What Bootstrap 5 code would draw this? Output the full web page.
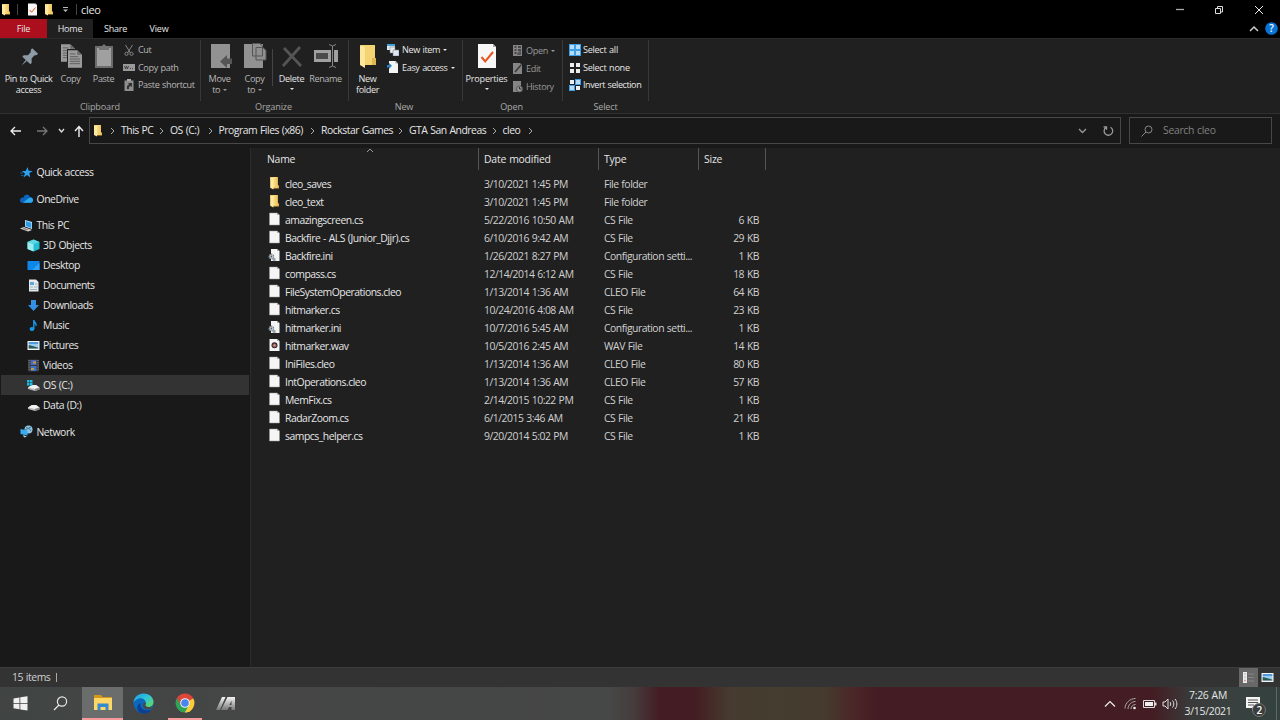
<!DOCTYPE html>
<html lang="en">
<head>
    <meta charset="UTF-8">
    <meta name="viewport" content="width=device-width, initial-scale=1.0">
    <title>cleo</title>
    <link rel="stylesheet" href="https://cdn.jsdelivr.net/npm/bootstrap@5.3.0/dist/css/bootstrap.min.css">
    <style>
        body { width: 1280px; height: 720px; background: #000; color: #e6e6e6; font: 10.4px/14px "Open Sans", "Noto Sans", sans-serif; letter-spacing: -.48px; word-spacing: .6px; }
        svg { display: block; flex: none; }
        .titlebar { height: 19px; padding-left: 1px; }
        .title-text { font-size: 11px; margin-left: 4px; letter-spacing: -.3px; }
        .vline { width: 1px; background: #444; }
        .winbtn { width: 39px; }
        .tabs { height: 19px; font-size: 9px; letter-spacing: -.2px; }
        .tabs .nav-link { padding: 0; color: #e6e6e6; line-height: 20px; height: 19px; text-align: center; border-radius: 0; }
        .tabs .tab-file { background: #ab0e1c; }
        .tabs .active { background: #202020; }
        .ribbon { height: 76px; background: #202020; border-top: 1px solid #2b2b2b; border-bottom: 1px solid #303030; font-size: 9.1px; letter-spacing: -.36px; }
        .group { border-right: 1px solid #383838; height: 61px; margin-top: 1px; position: relative; }
        .group-body { height: 59px; }
        .caption { text-align: center; color: #a8a8a8; line-height: 16px; letter-spacing: -.15px; }
        .big { text-align: center; line-height: 11.5px; padding-top: 3px; white-space: nowrap; }
        .big svg { margin: 0 auto 3.5px; }
        .dim { color: #b8b8b8; }
        .dimmer { color: #999; }
        .smalls { padding-top: 1px; }
        .smalls > div { height: 17.5px; display: flex; align-items: center; white-space: nowrap; padding-top: 1px; }
        .smalls.loose > div { height: 18px; }
        .smalls svg:first-child { margin-right: 3px; }
        .caret { display: inline-block; border: 2.5px solid transparent; border-top-color: currentColor; border-bottom: 0; margin-left: 3px; vertical-align: 2px; }
        .addressbar { height: 34px; background: #191919; padding-top: 3px; }
        .address, .search { height: 27px; border: 1px solid #484848; }
        .address { width: 1032px; padding-left: 3px; }
        .search { width: 143px; margin-left: 8px; color: #808080; padding-left: 11px; letter-spacing: -.3px; }
        .crumb { justify-content: space-between; padding-right: 6px; white-space: nowrap; }
        .crumb span { margin-top: -1px; }
        .main { height: 519px; }
        .sidebar { width: 251px; background: #191919; border-right: 1px solid #2b2b2b; padding: 14px 1px 0; letter-spacing: -.45px; }
        .node { height: 20px; padding-left: 19px; display: flex; align-items: center; }
        .node svg { margin-right: 3.5px; }
        .child { padding-left: 25.5px; }
        .gap-top { margin-top: 6.5px; }
        .picked { background: #333; }
        .files { background: #202020; padding-left: 16px; }
        .head { height: 22px; letter-spacing: -.2px; }
        .head > div { border-right: 1px solid #555; padding-top: 4px; position: relative; }
        .sort { position: absolute; left: 99px; top: 0; }
        .line { height: 18px; color: #d0d0d0; white-space: nowrap; }
        .line .fname { color: #e6e6e6; }
        .c-name { width: 212px; }
        .c-date { width: 120px; padding-left: 5px; }
        .c-type { width: 100px; padding-left: 5px; }
        .c-size { width: 67px; padding-left: 5px; }
        .c-kb { width: 60px; }
        .statusbar { height: 20px; background: #333; border-top: 1px solid #3c3c3c; color: #d0d0d0; padding-left: 12px; letter-spacing: -.45px; }
        .viewbtn { width: 19px; height: 19px; display: flex; align-items: center; justify-content: center; }
        .taskbar { height: 33px; background: linear-gradient(90deg, #404543, #464646 23%, #434745 37%, #464646 42%, #464848 47.5%, #463c3c 49.5%, #441d24 51.5%, #441d24 54.3%, #463b2e 57%, #443e30 61%, #453a2e 64.5%, #4b2527 66.8%, #431d23 68.5%, #431d23 90%, #393a3a 93%, #39413f 96%, #33423e); }
        .task { width: 41px; height: 33px; display: flex; align-items: center; justify-content: center; }
        .task.open { background: #6b6d6c; }
        .task.open, .task.running { border-bottom: 2px solid #f79a9c; }
        .task.running { width: 34px; margin: 0 3px 0 4px; }
        .clock { width: 52px; text-align: center; line-height: 15.5px; letter-spacing: -.25px; }
        .count { position: absolute; left: 6px; top: 6px; width: 14px; height: 14px; border-radius: 50%; background: #3a3d3c; border: 1px solid #777; font-size: 10px; font-weight: 600; line-height: 12px; text-align: center; color: #fff; }
    </style>
</head>
<body class="overflow-hidden">

<!-- Shared icons -->
<svg width="0" height="0" class="position-absolute">
    <defs>
        <linearGradient id="gold" x2="1"><stop stop-color="#ffe490"/><stop offset="1" stop-color="#e8bd55"/></linearGradient>
        <linearGradient id="edge" x2="1" y2="1"><stop stop-color="#1b9de2"/><stop offset=".5" stop-color="#31c5d5"/><stop offset="1" stop-color="#6bdd4c"/></linearGradient>
        <linearGradient id="silver" x2="0" y2="1"><stop stop-color="#f5f5f5"/><stop offset="1" stop-color="#777"/></linearGradient>
    </defs>
    <symbol id="i-folder" viewBox="0 0 10 13"><path d="M1 1h7v7l1 1v2.500H3z" fill="#d9a93f"/><path d="M3 1h5v7.500l1 .8v1.700H3z" fill="url(#gold)"/><path d="M1 1l3 1v10.500L1 11z" fill="#ffe9a0"/></symbol>
    <symbol id="i-page" viewBox="0 0 12 14"><path d="M1 1h7.500L11 3v10H1z" fill="#f5f5f5" stroke="#999" stroke-width=".5"/><path d="M8.500 1v2H11z" fill="#aaa"/></symbol>
    <symbol id="i-ini" viewBox="0 0 12 14"><path d="M2.500 1h6L11 3v10H2.500z" fill="#f5f5f5"/><path d="M8.500 1v2H11z" fill="#aaa"/><circle cx="2.900" cy="8.500" r="2.200" fill="#d7dde0" stroke="#7f8b92" stroke-width="1.400" stroke-dasharray="1.200 .6"/><circle cx="2.900" cy="8.500" r=".9" fill="#53616a"/><circle cx="5.600" cy="11.500" r="1.700" fill="#9aa6ad"/></symbol>
    <symbol id="i-wav" viewBox="0 0 12 14"><path d="M1 1h7.500L11 3v10H1z" fill="#f5f5f5"/><path d="M8.500 1v2H11z" fill="#aaa"/><circle cx="6" cy="7.300" r="3" fill="#3a2638"/><circle cx="6" cy="7.300" r="1.900" fill="#b9603d"/><circle cx="6" cy="7.300" r=".9" fill="#7cc0d8"/></symbol>
    <symbol id="i-check" viewBox="0 0 20 26"><path d="M1 1h15l3 3v21H1z" fill="#f7f7f7"/><path d="M16 1v3h3z" fill="#aaa"/><path d="M4.500 14l3.700 4.500L16 9" fill="none" stroke="#e8541e" stroke-width="2"/></symbol>
    <symbol id="i-chev" viewBox="0 0 5 8"><path d="M1 1l3 3-3 3" fill="none" stroke="#aaa"/></symbol>
    <symbol id="i-drive" viewBox="0 0 13 13"><path d="M1 8.500L5 6h4l3.500 2.500v2L8 12 1 10z" fill="#b8b8b8"/><path d="M1 8.500L5 6h4l3.500 2.500L8 10z" fill="#f2f2f2"/><path d="M8 10v2l4.500-1.500v-2z" fill="#888"/></symbol>
    <symbol id="i-picture" viewBox="0 0 13 11"><path d="M.5 1h12v9H.5z" fill="#f3f3f3"/><path d="M1.700 2.200h9.600v6.400H1.700z" fill="#9bcdf3"/><path d="M1.700 2.200h9.600v1.600H1.700z" fill="#3f8bd8"/><path d="M1.700 5l4 1 5.600 1.700v.9H1.700z" fill="#2c5a50"/></symbol>
    <symbol id="i-sheet" viewBox="0 0 15 19"><path d="M0 0h10l5 5v14H0z" fill="#9b9b9b"/><path d="M10 0v5h5z" fill="#666"/><path d="M2 4h6M2 7h9M2 9.500h11M2 12h11M2 14.500h11" stroke="#5d5d5d"/></symbol>
</svg>

<!-- Title bar -->
<div class="titlebar d-flex align-items-center">
    <svg width="10" height="13"><use href="#i-folder"/></svg>
    <div class="vline" style="height:11px;margin-left:6px"></div>
    <svg width="11" height="13" style="margin-left:9px"><use href="#i-check"/></svg>
    <svg width="10" height="13" style="margin-left:6px"><use href="#i-folder"/></svg>
    <svg width="5" height="6" style="margin-left:9px"><path d="M0 .5h5" stroke="#bbb"/><path d="M0 2.500h5L2.500 5z" fill="#bbb"/></svg>
    <div class="vline" style="height:11px;margin-left:8px"></div>
    <div class="title-text">cleo</div>
    <div class="d-flex ms-auto">
        <div class="winbtn"><svg class="mx-auto" width="9" height="10"><path d="M1 4.500h8" stroke="#aaa" stroke-width="1.300"/></svg></div>
        <div class="winbtn"><svg class="mx-auto" width="10" height="10" fill="none" stroke="#ddd"><path d="M1.500 3.500h5v5h-5zM3.500 3V1.500h5v5.500h-2"/></svg></div>
        <div class="winbtn" style="width:42px"><svg class="mx-auto" width="10" height="10"><path d="M1 1l8 8M9 1L1 9" stroke="#eee"/></svg></div>
    </div>
</div>

<!-- Ribbon tabs -->
<div class="tabs nav">
    <a class="nav-link tab-file" style="width:47px">File</a>
    <a class="nav-link active" style="width:46px">Home</a>
    <a class="nav-link" style="width:45px">Share</a>
    <a class="nav-link" style="width:42px">View</a>
    <div class="ms-auto d-flex align-items-center me-1">
        <svg width="11" height="7" style="margin-right:6px"><path d="M2 6l4-4 4 4" fill="none" stroke="#ccc" stroke-width="1.500"/></svg>
        <svg width="13" height="13" style="margin-right:-2px"><circle cx="6.500" cy="6.500" r="6.300" fill="#0a74d6"/><text x="6.500" y="10" text-anchor="middle" font-size="10" font-weight="600" fill="#fff">?</text></svg>
    </div>
</div>

<!-- Ribbon -->
<div class="ribbon d-flex">
    <div class="group" style="width:201px">
        <div class="group-body d-flex">
            <div class="big" style="width:57px">
                <svg width="26" height="26"><g transform="translate(13 14.500) rotate(43)" fill="#8c9ba5"><path d="M-4-9h8v2L2.600-5v4l3 3v2h-11V2l3-3v-4L-4-7z"/><path d="M-.8 4h1.600L0 11z"/></g></svg>
                Pin to Quick<br>access
            </div>
            <div class="big dim" style="width:27px">
                <svg width="22" height="26"><use href="#i-sheet" x="1" y="1" width="14" height="18"/><path d="M7 6h10l4 4v15H7z" fill="#202020"/><use href="#i-sheet" x="8" y="7" width="14" height="18"/></svg>
                Copy
            </div>
            <div class="big dim" style="width:39px">
                <svg width="20" height="26"><path d="M1 3h18v22H1z" fill="#6c6c6c"/><path d="M3 5h14v18H3z" fill="#a0a0a0"/><path d="M5 3h3l2-2 2 2h3v4H5z" fill="#757575"/></svg>
                Paste
            </div>
            <div class="smalls dim">
                <div><svg width="12" height="12" fill="none" stroke="#858585"><path d="M2.500 1l5 8M9.500 1l-5 8"/><circle cx="3.500" cy="9.800" r="1.600"/><circle cx="8.500" cy="9.800" r="1.600"/></svg>Cut</div>
                <div><svg width="12" height="9"><path d="M0 1h12v7H0z" fill="#999"/><path d="M1.500 3l1 3 1-3 1 3 1-3M7 5.500h1M9 5.500h1" fill="none" stroke="#333" stroke-width=".8"/></svg>Copy path</div>
                <div><svg width="12" height="12"><path d="M1.500 1.500h9V12h-9z" fill="#8d8d8d"/><path d="M4 0h4v2H4z" fill="#aaa"/><path d="M4 10V7l2-1.500-1-1.500h4v4L7.500 7 6 8v2z" fill="#333"/></svg>Paste shortcut</div>
            </div>
        </div>
        <div class="caption">Clipboard</div>
    </div>
    <div class="group" style="width:148px">
        <div class="group-body d-flex">
            <div class="big dim" style="width:37px">
                <svg width="24" height="26"><path d="M3 1h19v24H3z" fill="#929292"/><path d="M24 15.500h-5V12l-7 6.500 7 6.500v-4h5z" fill="#555"/></svg>
                Move<br>to <span class="caret dimmer m-0"></span>
            </div>
            <div class="big dim" style="width:33px">
                <svg width="24" height="26"><path d="M1 1h19v24H1z" fill="#929292"/><path d="M9.500.5H17l2.500 2.500v10h-10zM13 4.500h7l3 3v9.500H13z" fill="#909090" stroke="#555"/></svg>
                Copy<br>to <span class="caret dimmer m-0"></span>
            </div>
            <div class="vline" style="height:37px;margin:9px 1px 0"></div>
            <div class="big" style="width:35px">
                <svg width="24" height="26"><path d="M4 5l17 18M20 4L3 23" stroke="#555" stroke-width="2.800"/></svg>
                Delete<br><span class="caret m-0" style="vertical-align:3px"></span>
            </div>
            <div class="big dim" style="width:33px">
                <svg width="26" height="26"><path d="M1 7h24v12H1z" fill="#a0a0a0"/><path d="M3 10h12v6H3z" fill="#4b4b4b"/><path d="M19.500 2v22" stroke="#202020" stroke-width="3"/><path d="M16 1.500l3.500 1.500L23 1.500M19.500 3v20M16 24.500l3.500-1.500 3.500 1.500" stroke="#858585" fill="none"/></svg>
                Rename
            </div>
        </div>
        <div class="caption" style="padding-right:2px">Organize</div>
    </div>
    <div class="group" style="width:114px">
        <div class="group-body d-flex">
            <div class="big" style="width:38px;padding-right:1px">
                <svg width="18" height="26"><path d="M2 2h14v20H2z" fill="#f4d373"/><path d="M13 15h4v7h-4z" fill="#e0b64f"/><path d="M1 2l5 2v21l-5-3z" fill="#ffe69b"/></svg>
                New<br>folder
            </div>
            <div class="smalls">
                <div><svg width="12" height="12"><path d="M0 0h8v6H0z" fill="#d8ecfa"/><path d="M0 0h8v2H0z" fill="#45a0d8"/><path d="M3 3h5v6H3z" fill="#eee" stroke="#777" stroke-width=".5"/><path d="M6 6h6v6H6z" fill="#dde8f8" stroke="#777" stroke-width=".5"/></svg>New item<span class="caret"></span></div>
                <div><svg width="12" height="13"><path d="M2 0h6.500L11 2.500V12H2z" fill="#f5f5f5"/><path d="M8.500 0v2.500H11z" fill="#aaa"/><path d="M0 7V4h2V2l3 2.700L2 8V6z" fill="#2980c4"/></svg>Easy access<span class="caret"></span></div>
            </div>
        </div>
        <div class="caption" style="padding-right:3px">New</div>
    </div>
    <div class="group" style="width:100px">
        <div class="group-body d-flex">
            <div class="big" style="width:49px;padding-right:2px;letter-spacing:-.2px">
                <svg width="20" height="26"><use href="#i-check"/></svg>
                Properties<br><span class="caret m-0" style="vertical-align:3px"></span>
            </div>
            <div class="smalls loose dimmer">
                <div><svg width="11" height="13"><path d="M1 1h9v11H1z" fill="#858585"/><path d="M2.500 3h2M6 3h3M2.500 6h2M6 6h3M2.500 9h2" stroke="#333" stroke-width="1.400"/><path d="M5 11l1-3 3-1v4z" fill="#555"/></svg>Open<span class="caret"></span></div>
                <div><svg width="11" height="13"><path d="M1 1h7l2 2v9H1z" fill="#858585"/><path d="M3 10L9 3" stroke="#333" stroke-width="1.300"/></svg>Edit</div>
                <div><svg width="11" height="13"><path d="M1 1h8v11H1z" fill="#858585"/><circle cx="7.500" cy="9" r="3" fill="#999" stroke="#555"/><path d="M7.500 7v2h2" stroke="#333" fill="none"/></svg>History</div>
            </div>
        </div>
        <div class="caption" style="padding-right:2px">Open</div>
    </div>
    <div class="group" style="width:86px">
        <div class="group-body smalls" style="padding-left:6px;letter-spacing:-.28px">
            <div><svg width="12" height="12" style="margin-right:2px"><path d="M0 0h12v12H0z" fill="#3d9fe8"/><path d="M1 1h4v4H1zM7 1h4v4H7zM1 7h4v4H1zM7 7h4v4H7z" fill="#b5dcf9"/></svg>Select all</div>
            <div><svg width="12" height="12" style="margin-right:2px"><path d="M1 1h4v4H1zM7 1h4v4H7zM1 7h4v4H1zM7 7h4v4H7z" fill="#eee"/></svg>Select none</div>
            <div><svg width="12" height="12" style="margin-right:2px"><path d="M6 0h6v6H6zM0 6h6v6H0z" fill="#3d9fe8"/><path d="M7 1h4v4H7zM1 7h4v4H1z" fill="#b5dcf9"/><path d="M1 1h4v4H1zM7 7h4v4H7z" fill="#eee"/></svg><span style="letter-spacing:-.45px">Invert selection</span></div>
        </div>
        <div class="caption">Select</div>
    </div>
</div>

<!-- Address bar -->
<div class="addressbar d-flex">
    <div class="d-flex align-items-center" style="width:89px;padding-left:10px;height:27px">
        <svg width="12" height="12" fill="none" stroke="#eee" stroke-width="1.300"><path d="M11 6H1M5 2L1 6l4 4"/></svg>
        <svg width="12" height="12" fill="none" stroke="#777" stroke-width="1.300" style="margin-left:14px"><path d="M1 6h10M7 2l4 4-4 4"/></svg>
        <svg width="7" height="6" fill="none" stroke="#ddd" stroke-width="1.400" style="margin-left:10px"><path d="M1 1l2.500 3L6 1"/></svg>
        <svg width="10" height="12" fill="none" stroke="#eee" stroke-width="1.400" style="margin-left:8.500px"><path d="M5 12V2M1 6l4-4.500L9 6"/></svg>
    </div>
    <div class="address d-flex align-items-center">
        <svg width="10" height="13"><use href="#i-folder"/></svg>
        <svg width="5" height="8" style="margin:0 6px 0 7px"><use href="#i-chev"/></svg>
        <div id="crumbs" class="d-flex"></div>
        <svg class="ms-auto" width="9" height="6" style="margin-right:15.500px"><path d="M1 1l3.500 3.500L8 1" fill="none" stroke="#999" stroke-width="1.300"/></svg>
        <svg width="11" height="12" style="margin-right:6.500px" fill="none" stroke="#999" stroke-width="1.300"><path d="M7.500 2.200A4.300 4.300 0 1 1 3 2.400M.5 1.800h3v3"/></svg>
    </div>
    <div class="search d-flex align-items-center">
        <svg width="12" height="12" fill="none" stroke="#888"><circle cx="7.500" cy="4.500" r="3.500"/><path d="M5 7l-4.500 4.500"/></svg>
        <span style="margin:-1px 0 0 10px">Search cleo</span>
    </div>
</div>

<!-- Folder tree and file list -->
<div class="main d-flex">
    <div class="sidebar">
        <div class="node"><svg width="13" height="13"><path d="M7.500 1l1.200 3.800 4 .2-3.400 2.300 1 4.200-3.300-2.500L3.500 11.500 5 7.500 1.800 5l4 .1z" fill="#2ba0f5"/><path d="M0 7h3M1 9.500h2.500" stroke="#155b94"/></svg>Quick access</div>
        <div class="node gap-top"><svg width="13" height="13"><path d="M0 8.500C0 6 2 5 3.500 5.500 4.500 1.500 9 1.500 10 5c2 0 3 1.500 3 3s-1 2.800-2.500 2.800H3C1 10.800 0 10 0 8.500z" fill="#0a63bd"/><path d="M3 10.800L7.500 7l2.500-1.500c2 0 3 1.200 3 2.700s-1 2.600-2.500 2.600z" fill="#2da9ee"/></svg>OneDrive</div>
        <div class="node gap-top"><svg width="13" height="13"><path d="M5 1l7 2v7L5 7.500z" fill="#cde8f8"/><path d="M5.700 2l5.700 1.700V9L5.700 7z" fill="#2f9ce8"/><path d="M0 9.500L4 8l8 3-4 1.500z" fill="#d9d9d9"/><path d="M2 9.500l2.500-.8 4.500 2-2 .8z" fill="#888"/></svg>This PC</div>
        <div class="node child"><svg width="13" height="13"><path d="M6.500.5L12.500 3v7l-6 2.500L.5 10V3z" fill="#23bdd5"/><path d="M.5 3l6 2v7.500L.5 10z" fill="#9cebef"/><path d="M.5 3l6-2.500 6 2.500-6 2z" fill="#5dd8e2"/></svg>3D Objects</div>
        <div class="node child"><svg width="13" height="13"><path d="M.5 2h12v9H.5z" fill="#0e87e8"/><path d="M5 11l7.500-7v7z" fill="#2da5fc"/></svg>Desktop</div>
        <div class="node child"><svg width="13" height="13"><path d="M2 .5h7L11.500 3v9.500H2z" fill="#e9e9e9"/><path d="M3 3h4v3H3z" fill="#5aa8dd"/><path d="M8 5h2.500M3 8h3M7 8h3.500M3 10.500h7" stroke="#8db5cd"/></svg>Documents</div>
        <div class="node child"><svg width="13" height="13"><path d="M4 1h5v5h3L6.500 12 1 6h3z" fill="#3291e4"/></svg>Downloads</div>
        <div class="node child"><svg width="13" height="13"><ellipse cx="5" cy="10" rx="2.400" ry="2" fill="#169af0"/><path d="M6.800 10V1c0 2.500 3.200 3 2.200 6" fill="none" stroke="#169af0" stroke-width="1.400"/></svg>Music</div>
        <div class="node child"><svg width="13" height="11"><use href="#i-picture"/></svg>Pictures</div>
        <div class="node child"><svg width="13" height="13"><path d="M1 .5h11v12H1z" fill="#383838"/><path d="M3.500 1h6v5h-6z" fill="#4968be"/><path d="M3.500 7h6v5h-6z" fill="#3c72c4"/><path d="M6 2.500h3v2H6zM4 9h3v2H4z" fill="#c49a50"/><path d="M2 1v11M11 1v11" stroke="#999" stroke-dasharray="1 1.200"/></svg>Videos</div>
        <div class="node child picked"><svg width="13" height="13"><use href="#i-drive"/><path d="M0 1h2.500v2.500H0zM3 1h2.500v2.500H3zM0 4h2.500v2.500H0zM3 4h2.500v2.500H3z" fill="#18c0e8"/></svg>OS (C:)</div>
        <div class="node child"><svg width="13" height="13"><use href="#i-drive"/></svg>Data (D:)</div>
        <div class="node gap-top"><svg width="13" height="13"><circle cx="8.500" cy="4.500" r="4" fill="#92c5dc"/><path d="M6 2c2 2 4 1 5 4M5 5l6-3" stroke="#397da5" fill="none"/><path d="M.5 4l7 1.500v5L.5 9z" fill="#38adf2"/><path d="M3 10l4 1.500-3 1z" fill="#a6d8ee"/></svg>Network</div>
    </div>
    <div class="files flex-grow-1">
        <div class="head d-flex">
            <div class="c-name">Name<svg class="sort" width="8" height="5"><path d="M1 4l3-3 3 3" fill="none" stroke="#999"/></svg></div>
            <div class="c-date">Date modified</div>
            <div class="c-type">Type</div>
            <div class="c-size">Size</div>
        </div>
        <div id="fileList" style="padding-top:5px"></div>
    </div>
</div>

<!-- Status bar -->
<div class="statusbar d-flex align-items-center">
    <span style="margin-top:-2px">15 items</span>
    <div class="vline" style="height:9px;margin:-1px 0 0 6px;background:#aaa"></div>
    <div class="d-flex ms-auto" style="margin-right:3px">
        <div class="viewbtn" style="background:#686868"><svg width="13" height="13"><path d="M1 1h4v11H1z" fill="#eee"/><path d="M2.500 3h1M2.500 6h1" stroke="#778"/><path d="M2.500 9.500h1" stroke="#d44" stroke-width="1.500"/><path d="M6 3h6M6 6.500h6M6 10h6" stroke="#858585"/></svg></div>
        <div class="viewbtn"><svg width="13" height="11"><use href="#i-picture"/></svg></div>
    </div>
</div>

<!-- Taskbar -->
<div class="taskbar d-flex align-items-center">
    <div class="task"><svg width="15" height="15" fill="#f0f0f0"><path d="M.5 2.500L6.500 1.500V7h-6zM7.300 1.300L14.500.3V7H7.300zM.5 7.800h6v5.500l-6-1zM7.300 7.800h7.200v6.700l-7.200-1z"/></svg></div>
    <div class="task"><svg width="15" height="15" fill="none" stroke="#e8e8e8" stroke-width="1.200" style="margin-right:3px"><circle cx="9" cy="5.500" r="4.600"/><path d="M6 9L1 14"/></svg></div>
    <div class="task open"><svg width="20" height="17"><path d="M1 1h7l1.500 2H19v13H1z" fill="#d59719"/><path d="M1 4h18v12H1z" fill="#ffd767"/><path d="M4.500 16V9.500h11V16h-3v-3h-5v3z" fill="#348bd0"/></svg></div>
    <div class="task"><svg width="21" height="21"><circle cx="10.500" cy="10.500" r="10" fill="#0d67bd"/><path d="M.5 10C1 4 5 .5 10.500.5c6 0 10 4 10 8.500 0 3-2.500 5-5.500 5-2.500 0-3.500-1-2.500-2.500C14 8 10 4 6 5.500 3 6.500 1 8 .5 10z" fill="url(#edge)"/><path d="M7.500 10c-1 5 3 8.500 10.500 7-2 3-5 3.800-8 3.500C4 20 2 13 7.500 10z" fill="#0c3f92"/><path d="M13 11c-2 2 1.500 4 6 2.500l-1 2.500c-5 1.500-9-1-8-5 1-2 3-2 3 0z" fill="#464947"/></svg></div>
    <div class="task running"><svg width="20" height="20" viewBox="-10 -10 20 20"><path d="M0 0L-8.200-4.700A9.500 9.500 0 0 1 8.200-4.700z" fill="#df4639"/><path d="M0 0L8.200-4.700A9.500 9.500 0 0 1 0 9.500z" fill="#fbcc38"/><path d="M0 0L0 9.500A9.500 9.500 0 0 1-8.200-4.700z" fill="#2fa457"/><path d="M0-4.700h8.200L0 0zM-8.200-4.700L-4 2.400 0 0z" fill="#df4639"/><path d="M-4 2.400L0 9.500 4 2.400z" fill="#2fa457"/><path d="M4 2.400L0 9.500l5-1 3-6z" fill="#fbcc38"/><circle r="4.800" fill="#f3f3f3"/><circle r="3.800" fill="#4587ee"/></svg></div>
    <div class="task"><svg width="20" height="16"><path d="M6 1h3.500L4 14H0zM11.500 1H15L9 14H5z" fill="url(#silver)"/><path d="M14.500 1H19v13h-3.500v-3H13l-1.500 3H8.500zM15.500 4.500l-2 4.500h2z" fill="url(#silver)"/></svg></div>

    <div class="d-flex align-items-center ms-auto">
        <svg width="12" height="8" style="margin-right:8px"><path d="M1 6.500L6 1.500l5 5" fill="none" stroke="#eee" stroke-width="1.200"/></svg>
        <svg width="13" height="13" style="margin-right:6px" fill="none" stroke="#aaa"><path d="M1 11.500C1 6 6 1.500 11.500 1.500M4 12c0-4 3.500-7.500 7.500-7.500M7 12c0-2.500 2-4.500 4.500-4.500"/><circle cx="10.500" cy="11" r="1.300" fill="#eee" stroke="none"/></svg>
        <svg width="14" height="10" style="margin-right:5px"><path d="M.5 1.500h11v7H.5z" fill="none" stroke="#ddd"/><path d="M2 3h8v4H2z" fill="#eee"/><path d="M12 3.500h1.500v3H12z" fill="#ddd"/></svg>
        <svg width="16" height="14" fill="none" stroke="#ddd" style="margin-right:4px"><path d="M1 5h2l3-3v10L3 9H1zM8 5c1 1 1 3 0 4M10.500 3.500c1.800 2 1.800 5 0 7M13 2c2.500 3 2.500 7 0 10"/></svg>
        <div class="clock">7:26 AM<br>3/15/2021</div>
        <div class="position-relative" style="margin:0 16px 0 12px">
            <svg width="14" height="14"><path d="M0 0h14v11H9l-3 3v-3H0z" fill="#f5f5f5"/><path d="M2 3h10M2 5.500h10M2 8h6" stroke="#555"/></svg>
            <div class="count">2</div>
        </div>
        <div class="vline" style="height:33px;margin-right:3px;background:#666"></div>
    </div>
</div>

<script src="https://cdn.jsdelivr.net/npm/bootstrap@5.3.0/dist/js/bootstrap.bundle.min.js"></script>
<script>
    // [folder, cell width]
    const path = [
        ['This PC', 49],
        ['OS (C:)', 48.5],
        ['Program Files (x86)', 102.5],
        ['Rockstar Games', 88],
        ['GTA San Andreas', 93.5],
        ['cleo', 36]
    ];

    document.getElementById('crumbs').innerHTML = path.map(([name, width]) => `
        <div class="crumb d-flex align-items-center" style="width:${width}px">
            <span>${name}</span><svg width="5" height="8"><use href="#i-chev"/></svg>
        </div>
    `).join('');

    // [icon, name, date modified, type, size]
    const files = [
        ['folder', 'cleo_saves', '3/10/2021 1:45 PM', 'File folder', ''],
        ['folder', 'cleo_text', '3/10/2021 1:45 PM', 'File folder', ''],
        ['page', 'amazingscreen.cs', '5/22/2016 10:50 AM', 'CS File', '6 KB'],
        ['page', 'Backfire - ALS (Junior_Djjr).cs', '6/10/2016 9:42 AM', 'CS File', '29 KB'],
        ['ini', 'Backfire.ini', '1/26/2021 8:27 PM', 'Configuration setti...', '1 KB'],
        ['page', 'compass.cs', '12/14/2014 6:12 AM', 'CS File', '18 KB'],
        ['page', 'FileSystemOperations.cleo', '1/13/2014 1:36 AM', 'CLEO File', '64 KB'],
        ['page', 'hitmarker.cs', '10/24/2016 4:08 AM', 'CS File', '23 KB'],
        ['ini', 'hitmarker.ini', '10/7/2016 5:45 AM', 'Configuration setti...', '1 KB'],
        ['wav', 'hitmarker.wav', '10/5/2016 2:45 AM', 'WAV File', '14 KB'],
        ['page', 'IniFiles.cleo', '1/13/2014 1:36 AM', 'CLEO File', '80 KB'],
        ['page', 'IntOperations.cleo', '1/13/2014 1:36 AM', 'CLEO File', '57 KB'],
        ['page', 'MemFix.cs', '2/14/2015 10:22 PM', 'CS File', '1 KB'],
        ['page', 'RadarZoom.cs', '6/1/2015 3:46 AM', 'CS File', '21 KB'],
        ['page', 'sampcs_helper.cs', '9/20/2014 5:02 PM', 'CS File', '1 KB']
    ];

    document.getElementById('fileList').innerHTML = files.map(([icon, name, date, type, size]) => `
        <div class="line d-flex align-items-center">
            <div class="c-name fname d-flex align-items-center">
                <svg width="13" height="14" style="margin:-2px 4px 0 1px"><use href="#i-${icon}"/></svg>${name}
            </div>
            <div class="c-date">${date}</div>
            <div class="c-type">${type}</div>
            <div class="c-kb text-end">${size}</div>
        </div>
    `).join('');
</script>

</body>
</html>
